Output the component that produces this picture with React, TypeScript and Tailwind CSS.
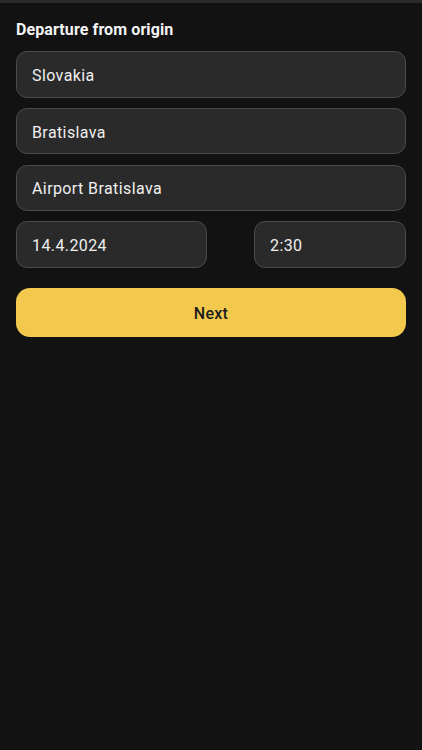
import React from "react";

function Field({ value, className = "" }: { value: string; className?: string }) {
  return (
    <div
      className={`h-[46.5px] rounded-[11px] border-[1.5px] border-[#4a4a4a] bg-[#2a2a2a] flex items-center pl-[15px] pt-[3px] text-[16px] tracking-[0.4px] text-[#efefef] ${className}`}
    >
      {value}
    </div>
  );
}

export default function App() {
  return (
    <div
      className="w-[422px] h-[750px] bg-[#121212] flex flex-col"
      style={{ fontFamily: "Roboto, 'Liberation Sans', sans-serif" }}
    >
      <div className="h-[3px] bg-[#2b2b2b]" />
      <div className="px-[16px] flex flex-col">
        <div className="mt-[17px] text-[16px] font-bold text-[#f4f4f4] leading-[20px] tracking-[0.1px]">
          Departure from origin
        </div>
        <div className="mt-[11px] flex flex-col gap-[10.3px]">
          <Field value="Slovakia" />
          <Field value="Bratislava" />
          <Field value="Airport Bratislava" />
          <div className="flex justify-between">
            <Field value="14.4.2024" className="w-[191px]" />
            <Field value="2:30" className="w-[152px]" />
          </div>
        </div>
        <button className="mt-[20px] h-[49px] rounded-[14px] bg-[#f2c94c] text-[#1c1c1c] text-[16px] font-medium tracking-[0.3px] flex items-center justify-center pt-[3px]">
          Next
        </button>
      </div>
    </div>
  );
}
